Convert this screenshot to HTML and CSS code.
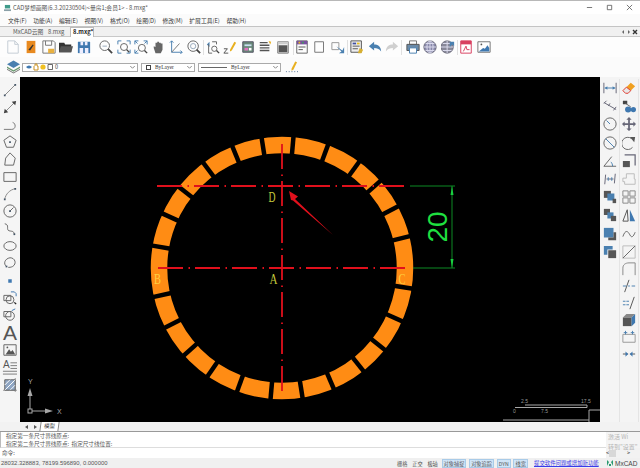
FILE: index.html
```html
<!DOCTYPE html>
<html lang="zh-CN">
<head>
    <meta charset="UTF-8">
    <title>CAD梦想画图</title>
    <link rel="stylesheet" href="styles.css">
</head>
<body>
    <!-- Barra de título -->
    <div class="titlebar">
        <svg class="app-ico" viewBox="0 0 8 9"><path d="M1 1H7V5H1Z" fill="#3f9a8a"/><path d="M0 6H8V8H0Z" fill="#8aa0a8"/></svg>
        <span class="title-text">CAD梦想画图(6.3.20230504)&lt;量房1;会员1&gt; - 8.mxg*</span>
        <div class="win-btns">
            <svg viewBox="0 0 8 8"><path d="M1 4H7"/></svg>
            <svg viewBox="0 0 8 8"><path d="M1.5 1.5H6.5V6.5H1.5Z"/></svg>
            <svg viewBox="0 0 8 8"><path d="M1 1L7 7M7 1L1 7"/></svg>
        </div>
    </div>

    <!-- Menu -->
    <div class="menubar">
        <span>文件(F)</span><span>功能(A)</span><span>编辑(E)</span><span>视图(V)</span><span>格式(O)</span><span>绘图(D)</span><span>修改(M)</span><span>扩展工具(E)</span><span>帮助(H)</span>
    </div>

    <!-- Abas -->
    <div class="tabbar">
        <span class="tab">MxCAD云图</span>
        <span class="tab tab-file">8.mxg</span>
        <span class="tab tab-active">8.mxg*</span>
        <div class="tab-ctrl">
            <svg viewBox="0 0 6 6"><path d="M4 1L2 3L4 5Z" fill="#666"/></svg>
            <svg viewBox="0 0 6 6"><path d="M2 1L4 3L2 5Z" fill="#666"/></svg>
            <svg viewBox="0 0 6 6"><path d="M1 1L5 5M5 1L1 5" stroke="#333" stroke-width="1.4"/></svg>
        </div>
    </div>

    <!-- Barra de ferramentas principal -->
    <div class="toolbar">
        <div class="group g1">
            <span class="slot"><svg class="ico" viewBox="0 0 16 16"><path d="M2 1H10L14 5V15H2Z" stroke="#c4ccd4"/><path d="M10 1V5H14" stroke="#c4ccd4"/></svg></span>
            <span class="slot"><svg class="ico" viewBox="0 0 16 16"><path d="M3 1H13V15H3Z" fill="#e88a20" stroke="none"/><path d="M5 11L10 5L11 6L7 12Z" fill="#333" stroke="none"/></svg></span>
            <span class="slot"><svg class="ico" viewBox="0 0 16 16"><path d="M1 1H13L15 3V15H1Z" stroke="#777"/><path d="M4 1V6H11V1" stroke="#777"/><path d="M7 10H14V15H7Z" fill="#e8b040" stroke="none"/></svg></span>
            <span class="slot"><svg class="ico" viewBox="0 0 16 16"><path d="M0 3H6L7 5H14V14H0Z" fill="#333" stroke="none"/><path d="M2 7H16L14 14H0Z" fill="#555" stroke="none"/></svg></span>
            <span class="slot"><svg class="ico" viewBox="0 0 16 16"><path d="M1 2H15V15H1Z" fill="#3f78b0" stroke="none"/><path d="M4 2H7V6H4ZM9 2H12V6H9ZM3 9H7V15H3ZM9 9H13V15H9Z" fill="#eef" stroke="none"/></svg></span>
        </div>
        <div class="group g2">
            <span class="slot"><svg class="ico" viewBox="0 0 16 16"><circle cx="6.5" cy="6.5" r="5.5"/><path d="M10.5 10.5L15 15" stroke="#444" stroke-width="2"/><path d="M4 7H9" stroke="#9ab"/></svg></span>
            <span class="slot"><svg class="ico" viewBox="0 0 16 16"><path d="M1 5V1H5M11 1H15V5M15 11V15H11M5 15H1V11" stroke="#4a80b0"/><circle cx="8" cy="8" r="4"/><path d="M11 11L14 14" stroke="#444" stroke-width="1.6"/></svg></span>
            <span class="slot"><svg class="ico" viewBox="0 0 16 16"><path d="M1 5V1H5M11 1H15V5M1 1L4 4M15 1L12 4M1 15V11M1 15H5M1 15L4 12" stroke="#4a80b0"/><circle cx="9" cy="9" r="4"/><path d="M12 12L15 15" stroke="#444" stroke-width="1.6"/></svg></span>
            <span class="slot"><svg class="ico" viewBox="0 0 16 16"><path d="M4 15L2 9V7L4 8V3H6V2H8V3H10V4H12V11L10 15Z" fill="#666" stroke="none"/></svg></span>
            <span class="slot"><svg class="ico" viewBox="0 0 16 16"><path d="M3 1V14H15" stroke="#4a80b0"/><path d="M3 14L12 4" stroke="#777"/><path d="M1 3L3 1L5 3M13 12L15 14L13 16" stroke="#4a80b0"/></svg></span>
            <span class="slot"><svg class="ico" viewBox="0 0 16 16"><circle cx="7" cy="7" r="6"/><circle cx="7" cy="7" r="3" stroke="#9ab"/><path d="M11 11L15 15" stroke="#444" stroke-width="2"/></svg></span>
        </div>
        <span class="sep"></span>
        <div class="group">
            <span class="slot"><svg class="ico" viewBox="0 0 16 16"><path d="M1 5L4 2L4 8Z" fill="#4a80b0" stroke="none"/><path d="M3 5V15H7M7 2H12V5"/><circle cx="9.5" cy="10" r="3"/><path d="M12 12L15 15" stroke="#444" stroke-width="1.6"/></svg></span>
            <span class="slot"><svg class="ico" viewBox="0 0 16 16"><path d="M8 11L13 2L15 3L10 12L8 13Z" fill="#e8b020" stroke="none"/><path d="M1 10H5L1 15H6" stroke="#555"/></svg></span>
            <span class="slot"><svg class="ico" viewBox="0 0 16 16"><path d="M2 2H14V14H2Z" fill="#6a8a7a" stroke="#556"/><path d="M4 5H12V7H4Z" fill="#c8e0f0" stroke="none"/><path d="M4 9H8V12H4Z" fill="#e070c0" stroke="none"/><path d="M9 9H12V12H9Z" fill="#fff" stroke="none"/></svg></span>
            <span class="slot"><svg class="ico" viewBox="0 0 16 16"><path d="M2 3H11M2 6H13M2 9H13M2 12H13" stroke="#555" stroke-width="1.6"/><path d="M12 1L15 2L14 5Z" fill="#e8b020" stroke="none"/></svg></span>
            <span class="slot"><svg class="ico" viewBox="0 0 16 16"><path d="M2 2H14V15H2Z" stroke="#777"/><path d="M2 2H14V5H2Z" fill="#ccc" stroke="none"/><path d="M3 6H13V14H3Z" fill="#555" stroke="none"/></svg></span>
        </div>
        <span class="sep s1"></span>
        <div class="group">
            <span class="slot"><svg class="ico" viewBox="0 0 16 16"><path d="M2 1H14V15H2Z" stroke="#666"/><path d="M2 1H14V5H2Z" fill="#7a50a0" stroke="none"/><path d="M4 2H6V4H4Z" fill="#e8c020" stroke="none"/><path d="M8 2H10V4H8Z" fill="#40a060" stroke="none"/><path d="M4 8H12M4 11H9" stroke="#555"/></svg></span>
            <span class="slot"><svg class="ico" viewBox="0 0 16 16"><path d="M2 2H12V14H2Z" stroke="#777"/></svg></span>
            <span class="slot"><svg class="ico" viewBox="0 0 16 16"><path d="M1 3H9V11H1Z" stroke="#999"/><path d="M6 7L13 12L15 8L15 15L9 15L12 13Z" fill="#4a80b0" stroke="none"/></svg></span>
        </div>
        <span class="sep s1"></span>
        <div class="group">
            <span class="slot"><svg class="ico" viewBox="0 0 16 16"><path d="M1 1H13V14H1Z" fill="#eee" stroke="#555"/><path d="M3 3H7V5H3Z" fill="#4050a0" stroke="none"/><path d="M8 3H11V5H8Z" fill="#e8c020" stroke="none"/><path d="M3 7H11M3 10H9" stroke="#555"/><path d="M9 15L11 9L15 11L13 15Z" fill="#d8b030" stroke="none"/></svg></span>
            <span class="slot"><svg class="ico" viewBox="0 0 16 16"><path d="M1 7L7 2V5C11 5 15 7 15 13C13 10 10 9 7 9V12Z" fill="#4a80b0" stroke="none"/></svg></span>
        </div>
        <div class="group g-redo">
            <span class="slot"><svg class="ico" viewBox="0 0 16 16"><path d="M15 7L9 2V5C5 5 1 7 1 13C3 10 6 9 9 9V12Z" fill="#d0d0d0" stroke="none"/></svg></span>
        </div>
        <span class="sep"></span>
        <div class="group g-print">
            <span class="slot"><svg class="ico" viewBox="0 0 16 16"><path d="M4 1H12V5H4Z" stroke="#777"/><path d="M1 5H15V12H1Z" fill="#6a8aa8" stroke="#555"/><path d="M4 9H12V15H4Z" fill="#fff" stroke="#4a80b0"/></svg></span>
            <span class="slot"><svg class="ico" viewBox="0 0 16 16"><circle cx="8" cy="8" r="7" fill="#88a" stroke="#667"/><path d="M1 8H15M8 1V15M3 4H13M3 12H13" stroke="#dde"/><ellipse cx="8" cy="8" rx="3.5" ry="7" stroke="#dde"/></svg></span>
            <span class="slot"><svg class="ico" viewBox="0 0 16 16"><circle cx="7" cy="8" r="7" fill="#889" stroke="#667"/><path d="M0 8H14M7 1V15M2 4H12M2 12H12" stroke="#dde"/><path d="M10 2H15V7L13 5L10 8Z" fill="#4a80b0" stroke="none"/></svg></span>
        </div>
        <span class="sep"></span>
        <div class="group">
            <span class="slot"><svg class="ico" viewBox="0 0 16 16"><path d="M2 1H14V15H2Z" fill="#fff" stroke="#d84060"/><path d="M2 1H14V5H2Z" fill="#d84060" stroke="none"/><path d="M5 13L8 7L9 11H12" stroke="#d84060"/></svg></span>
            <span class="slot"><svg class="ico" viewBox="0 0 16 16"><path d="M1 2H15V14H1Z" fill="#fff" stroke="#777"/><path d="M2 13L7 9L9 10L12 6L14 9V13Z" fill="#3f78b0" stroke="none"/><circle cx="5" cy="5" r="1" fill="#555" stroke="none"/></svg></span>
        </div>
    </div>

    <!-- Barra de camadas -->
    <div class="layerbar">
        <svg class="layers-ico" viewBox="0 0 14 14"><path d="M7 0L14 4L7 8L0 4Z" fill="#4a80b0"/><path d="M0 6.5L7 10.5L14 6.5V8L7 12L0 8Z" fill="#6a9a70"/><path d="M0 9L7 13L14 9V10L7 14L0 10Z" fill="#777"/></svg>
        <div class="combo combo-layer">
            <svg class="state" viewBox="0 0 28 8"><path d="M1 4Q4 1 7 4Q4 7 1 4Z" fill="#3f78b0"/><path d="M9 3V7H13V3H12V1H10V3" fill="none" stroke="#c89020"/><circle cx="18" cy="4" r="2.6" fill="#f0c020"/><path d="M23 1.5H27.500V6.500H23Z" fill="#fff" stroke="#444" stroke-width=".8"/></svg>
            <span class="combo-label">0</span>
            <svg class="chev" viewBox="0 0 6 4"><path d="M0 0L3 3L6 0"/></svg>
        </div>
        <div class="combo combo-color">
            <span class="swatch"></span>
            <span class="combo-label serif">ByLayer</span>
            <svg class="chev" viewBox="0 0 6 4"><path d="M0 0L3 3L6 0"/></svg>
        </div>
        <div class="combo combo-line">
            <span class="line-sample"></span>
            <span class="combo-label serif">ByLayer</span>
            <svg class="chev" viewBox="0 0 6 4"><path d="M0 0L3 3L6 0"/></svg>
        </div>
        <svg class="match-ico" viewBox="0 0 14 14"><path d="M7 9L11 1L13 2L9 10L7 11Z" fill="#e8b020"/><path d="M1 12H2M4 12H5M7 12H8M10 12H11M13 12H14" stroke="#4a6a90"/></svg>
    </div>

    <!-- Área central -->
    <div class="workspace">
        <div class="side-left">
            <span class="vslot"><svg class="ico" viewBox="0 0 16 16"><path d="M2 14L14 2" stroke="#888"/><path d="M1 13H3V15H1ZM13 1H15V3H13Z" fill="#456" stroke="none"/></svg></span>
            <span class="vslot"><svg class="ico" viewBox="0 0 16 16"><path d="M2 14L14 2" stroke="#888"/><path d="M1 15L2 10L6 14ZM15 1L14 6L10 2Z" fill="#444" stroke="none"/></svg></span>
            <span class="vslot"><svg class="ico" viewBox="0 0 16 16"><path d="M1 13H10C15 13 15 6 11 5" stroke="#777"/></svg></span>
            <span class="vslot"><svg class="ico" viewBox="0 0 16 16"><path d="M8 1L15 6L12 14H4L1 6Z"/><path d="M7 7H9V9H7Z" fill="#456" stroke="none"/></svg></span>
            <span class="vslot"><svg class="ico" viewBox="0 0 16 16"><path d="M2 15L3 7L8 1L14 7L12 15Z"/></svg></span>
            <span class="vslot"><svg class="ico" viewBox="0 0 16 16"><path d="M1 3H15V13H1Z"/></svg></span>
            <span class="vslot"><svg class="ico" viewBox="0 0 16 16"><path d="M2 14C3 8 8 3 14 2" stroke="#888"/><path d="M1 13H3V15H1ZM13 1H15V3H13Z" fill="#456" stroke="none"/></svg></span>
            <span class="vslot"><svg class="ico" viewBox="0 0 16 16"><circle cx="8" cy="8" r="7"/><path d="M8 8L12 4"/><path d="M7 7H9V9H7Z" fill="#456" stroke="none"/></svg></span>
            <span class="vslot"><svg class="ico" viewBox="0 0 16 16"><path d="M2 2C8 3 3 9 7 10S12 10 13 14"/><path d="M12 13H14V15H12Z" fill="#456" stroke="none"/></svg></span>
            <span class="vslot"><svg class="ico" viewBox="0 0 16 16"><ellipse cx="8" cy="8" rx="7" ry="5"/></svg></span>
            <span class="vslot"><svg class="ico" viewBox="0 0 16 16"><path d="M4 12C0 9 2 3 8 2C14 2 16 9 11 12C9 13 7 13 6 13"/><path d="M3 11H5V13H3Z" fill="#456" stroke="none"/></svg></span>
            <span class="vslot"><svg class="ico" viewBox="0 0 16 16"><path d="M6 6H10V10H6Z" fill="#3f78b0" stroke="none"/></svg></span>
            <span class="vslot"><svg class="ico" viewBox="0 0 16 16"><path d="M1 5H9V11H1Z"/><circle cx="8" cy="10" r="4.500"/><path d="M9 1H13L15 3V6" stroke="#3f78b0"/><path d="M13 13L15 15" stroke="#222" stroke-width="1.6"/></svg></span>
            <span class="vslot"><svg class="ico" viewBox="0 0 16 16"><path d="M1 4H9V10H1Z"/><circle cx="8" cy="9" r="5"/><path d="M10 3L14 1" stroke="#3f78b0"/></svg></span>
            <span class="vslot big-a">A</span>
            <span class="vslot"><svg class="ico" viewBox="0 0 16 16"><path d="M1 2H15V14H1Z"/><path d="M3 13L7 7L9 10L11 8L14 13Z" fill="#555" stroke="none"/><circle cx="5" cy="5" r="1" fill="#555" stroke="none"/></svg></span>
            <span class="vslot mtext">A<svg class="ico-lines" viewBox="0 0 16 16"><path d="M9 3H16M9 6H16M9 9H16M1 12H16M1 15H16"/></svg></span>
            <span class="vslot"><svg class="ico" viewBox="0 0 16 16"><path d="M2 2H14V14H2Z" fill="#8fa6c4"/><path d="M2 8L8 2M2 14L14 2M8 14L14 8" stroke="#fff"/><path d="M0 14H16M14 0V16" stroke="#777" stroke-width=".8"/></svg></span>
        </div>

        <!-- Desenho: coordenadas do viewBox = coordenadas da página -->
        <svg class="canvas" viewBox="20 77 580 345">
            <circle class="ring" cx="282" cy="268" r="123"/>
            <g class="gaps">
                <line x1="282" y1="132" x2="282" y2="158" transform="rotate(5 282 268)"/>
                <line x1="282" y1="132" x2="282" y2="158" transform="rotate(20.5 282 268)"/>
                <line x1="282" y1="132" x2="282" y2="158" transform="rotate(36 282 268)"/>
                <line x1="282" y1="132" x2="282" y2="158" transform="rotate(48.5 282 268)"/>
                <line x1="282" y1="132" x2="282" y2="158" transform="rotate(62 282 268)"/>
                <line x1="282" y1="132" x2="282" y2="158" transform="rotate(76 282 268)"/>
                <line x1="282" y1="132" x2="282" y2="158" transform="rotate(99 282 268)"/>
                <line x1="282" y1="132" x2="282" y2="158" transform="rotate(113.9 282 268)"/>
                <line x1="282" y1="132" x2="282" y2="158" transform="rotate(128.5 282 268)"/>
                <line x1="282" y1="132" x2="282" y2="158" transform="rotate(141.7 282 268)"/>
                <line x1="282" y1="132" x2="282" y2="158" transform="rotate(156.8 282 268)"/>
                <line x1="282" y1="132" x2="282" y2="158" transform="rotate(171 282 268)"/>
                <line x1="282" y1="132" x2="282" y2="158" transform="rotate(185 282 268)"/>
                <line x1="282" y1="132" x2="282" y2="158" transform="rotate(200 282 268)"/>
                <line x1="282" y1="132" x2="282" y2="158" transform="rotate(214.5 282 268)"/>
                <line x1="282" y1="132" x2="282" y2="158" transform="rotate(228.3 282 268)"/>
                <line x1="282" y1="132" x2="282" y2="158" transform="rotate(243 282 268)"/>
                <line x1="282" y1="132" x2="282" y2="158" transform="rotate(257.3 282 268)"/>
                <line x1="282" y1="132" x2="282" y2="158" transform="rotate(279.8 282 268)"/>
                <line x1="282" y1="132" x2="282" y2="158" transform="rotate(294.5 282 268)"/>
                <line x1="282" y1="132" x2="282" y2="158" transform="rotate(308.2 282 268)"/>
                <line x1="282" y1="132" x2="282" y2="158" transform="rotate(323.2 282 268)"/>
                <line x1="282" y1="132" x2="282" y2="158" transform="rotate(337.8 282 268)"/>
                <line x1="282" y1="132" x2="282" y2="158" transform="rotate(351.1 282 268)"/>
            </g>
            <g class="center-lines">
                <line x1="157" y1="186" x2="406" y2="186"/>
                <line x1="158" y1="268" x2="406" y2="268"/>
                <line x1="282" y1="144" x2="282" y2="392"/>
            </g>
            <path class="arrow" d="M289 191L298 196.500L295 199L333 235L293 200.500L291 200Z"/>
            <text class="lbl lbl-olive" x="268.500" y="202" textLength="7" lengthAdjust="spacingAndGlyphs">D</text>
            <text class="lbl lbl-olive" x="269.500" y="284" textLength="8" lengthAdjust="spacingAndGlyphs">A</text>
            <text class="lbl lbl-amber" x="154" y="284" textLength="7" lengthAdjust="spacingAndGlyphs">B</text>
            <text class="lbl lbl-amber" x="398.500" y="284" textLength="7" lengthAdjust="spacingAndGlyphs">C</text>
            <g class="dim">
                <line x1="410" y1="186" x2="455" y2="186"/>
                <line x1="413" y1="268" x2="455" y2="268"/>
                <line x1="452" y1="186" x2="452" y2="268"/>
            </g>
            <path class="dim-head" d="M452 186L453.500 195H450.500ZM452 268L453.500 259H450.500Z"/>
            <text class="dim-text" transform="translate(447 227) rotate(-90)">20</text>
            <g class="ucs">
                <path d="M30 409V393M32 411H48"/>
                <path class="ucs-head" d="M30 388L32.500 396H27.500ZM53 411L45 413.500V408.500Z"/>
                <rect x="28" y="409" width="4" height="4"/>
            </g>
            <text class="ucs-text" x="28" y="384">Y</text>
            <text class="ucs-text" x="57" y="414">X</text>
            <g class="ucs">
                <path d="M515 407.500H525M525 405H587V407.500H525M503 420H589M589 422V410H600"/>
            </g>
            <text class="scale-text" x="521" y="403">2.5</text>
            <text class="scale-text" x="581" y="403">17.5</text>
            <text class="scale-text" x="513" y="413">0</text>
            <text class="scale-text" x="541" y="413">7.5</text>
        </svg>

        <div class="side-right">
            <div class="col">
                <span class="rslot"><svg class="ico" viewBox="0 0 16 16"><path d="M1 2V14M15 2V14" stroke="#667"/><path d="M2 8H14" stroke="#4a80b0"/><path d="M2 8L5 6V10ZM14 8L11 6V10Z" fill="#4a80b0" stroke="none"/></svg></span>
                <span class="rslot"><svg class="ico" viewBox="0 0 16 16"><path d="M1 4L15 12M4 2L1 5M15 9L12 13M6 8L8 5" stroke="#667"/></svg></span>
                <span class="rslot"><svg class="ico" viewBox="0 0 16 16"><circle cx="8" cy="8" r="7"/><path d="M8 8L4 4" stroke="#4a80b0"/></svg></span>
                <span class="rslot"><svg class="ico" viewBox="0 0 16 16"><circle cx="8" cy="8" r="7"/><path d="M3 3L13 13" stroke="#4a80b0"/></svg></span>
                <span class="rslot"><svg class="ico" viewBox="0 0 16 16"><path d="M1 14H15M1 14L10 3"/><path d="M9 9C10 10 11 12 11 14" stroke="#4a80b0"/></svg></span>
                <span class="rslot"><svg class="ico" viewBox="0 0 16 16"><path d="M3 3L2 14M14 2L13 13M4 8H12" stroke="#667"/><path d="M6 6V10M10 6V10" stroke="#4a80b0"/></svg></span>
                <span class="rslot"><svg class="ico" viewBox="0 0 16 16"><path d="M1 1H9V9H1Z" fill="#555" stroke="none"/><path d="M5 4H13V12H5Z" fill="#4a80b0" stroke="none"/><path d="M11 10H15V15H11Z" fill="#555" stroke="none"/></svg></span>
                <span class="rslot"><svg class="ico" viewBox="0 0 16 16"><path d="M1 1H8V8H1Z" fill="#555" stroke="none"/><path d="M5 5H12V12H5Z" fill="#4a80b0" stroke="none"/><path d="M9 9H15V15H9Z" fill="#555" stroke="none"/></svg></span>
                <span class="rslot"><svg class="ico" viewBox="0 0 16 16"><path d="M1 1H12V12H1Z" fill="#4a80b0" stroke="none"/><path d="M12 6H15V15H6V12H12Z" fill="#555" stroke="none"/></svg></span>
                <span class="rslot"><svg class="ico" viewBox="0 0 16 16"><path d="M1 1H11V5H5V11H1Z" fill="#4a80b0" stroke="none"/><path d="M6 6H15V15H6Z" fill="#555" stroke="none"/></svg></span>
            </div>
            <div class="col col-2">
                <span class="rslot"><svg class="ico" viewBox="0 0 16 16"><path d="M1 11L10 2L15 6L7 14H4Z" fill="#f0a020" stroke="none"/><path d="M1 11L5 7L10 11L7 14H4Z" fill="#e8e8e8" stroke="#e04040"/></svg></span>
                <span class="rslot"><svg class="ico" viewBox="0 0 16 16"><path d="M1 2H6V6H1Z" fill="#444" stroke="none"/><path d="M4 5L10 9" stroke="#666"/><circle cx="7" cy="12" r="3.500" fill="#3f78b0" stroke="none"/><circle cx="13" cy="12" r="3" fill="#3f78b0" stroke="none"/></svg></span>
                <span class="rslot"><svg class="ico" viewBox="0 0 16 16"><path d="M8 0L11 3H9V7H13V5L16 8L13 11V9H9V13H11L8 16L5 13H7V9H3V11L0 8L3 5V7H7V3H5Z" fill="#667" stroke="none"/></svg></span>
                <span class="rslot"><svg class="ico" viewBox="0 0 16 16"><path d="M12 13A7 7 0 1 1 11 3"/><path d="M9 1L15 1L14 7Z" fill="#555" stroke="none"/></svg></span>
                <span class="rslot"><svg class="ico" viewBox="0 0 16 16"><path d="M3 1H15V13" stroke="#667" stroke-width="1.4"/><path d="M1 8H9V15H1Z" fill="#555" stroke="none"/></svg></span>
                <span class="rslot"><svg class="ico" viewBox="0 0 16 16"><path d="M5 2H14V8H15V14H3V11H1V7H5Z" stroke="#bbb"/></svg></span>
                <span class="rslot"><svg class="ico" viewBox="0 0 16 16"><path d="M1 1H7V7H1ZM9 1H15V7H9ZM1 9H7V15H1ZM9 9H15V15H9Z" stroke="#888"/></svg></span>
                <span class="rslot"><svg class="ico" viewBox="0 0 16 16"><path d="M6 2L1 15H7Z" stroke="#555"/><path d="M9 2L15 15H9Z" fill="#3f78b0" stroke="none"/></svg></span>
                <span class="rslot"><svg class="ico" viewBox="0 0 16 16"><path d="M1 11C4 2 7 5 9 9S13 11 15 6"/></svg></span>
                <span class="rslot"><svg class="ico" viewBox="0 0 16 16"><path d="M1 1H15V15H1Z" stroke="#bbb"/><path d="M1 15L15 1"/></svg></span>
                <div class="col-lower">
                    <span class="lslot"><svg class="ico" viewBox="0 0 16 16"><path d="M1 15V7C1 3 4 1 8 1H15V15" stroke="#888"/></svg></span>
                    <span class="lslot"><svg class="ico" viewBox="0 0 16 16"><path d="M3 15L8 1" stroke="#555"/><path d="M1 8H5M7 8H9M11 8H15" stroke="#4a80b0"/></svg></span>
                    <span class="lslot"><svg class="ico" viewBox="0 0 16 16"><path d="M9 15L14 1" stroke="#555"/><path d="M1 6H9M1 10H9" stroke="#4a80b0" stroke-dasharray="3 1"/></svg></span>
                    <span class="lslot"><svg class="ico" viewBox="0 0 16 16"><path d="M1 5H11V15H1Z" fill="#555" stroke="none"/><path d="M1 5L5 1H15L11 5Z" fill="#888" stroke="none"/><path d="M11 5L15 1V11L11 15Z" fill="#3f78b0" stroke="none"/></svg></span>
                    <span class="lslot"><svg class="ico" viewBox="0 0 16 16"><path d="M1 5H15V14H1Z" stroke="#999"/><path d="M4 1V5M2 3H6M12 1V5M10 3H14" stroke="#4a80b0"/></svg></span>
                    <span class="lslot"><svg class="ico" viewBox="0 0 16 16"><path d="M1 8H7M9 8H15" stroke="#555"/><path d="M7 8L4 5V11ZM9 8L12 5V11Z" fill="#3f78b0" stroke="none"/></svg></span>
                </div>
            </div>
        </div>
    </div>

    <!-- Abas de modelo e linha de comando -->
    <div class="sheetbar">
        <svg class="sheet-nav" viewBox="0 0 14 6"><path d="M4 1L1 3L4 5ZM10 1L13 3L10 5Z" fill="#555"/></svg>
        <span class="sheet-tab">模型</span>
    </div>
    <div class="cmd-history">
        <p>指定第一条尺寸界线原点:</p>
        <p>指定第二条尺寸界线原点:&nbsp;&nbsp;指定尺寸线位置:</p>
    </div>
    <div class="cmd-input">
        <span>命令:</span>
        <div class="cmd-scroll"><span>&lt;</span><i></i><span>&gt;</span></div>
    </div>
    <div class="activate">
        <span>激活 Wi</span>
        <span>转到"设置"</span>
    </div>

    <!-- Barra de status -->
    <div class="statusbar">
        <span class="coords">28032.328883, 78199.596890, 0.000000</span>
        <div class="toggles">
            <span>栅格</span><span>正交</span><span>极轴</span>
            <span class="on">对象捕捉</span><span class="on">对象追踪</span><span class="on">DYN</span><span class="on">线宽</span>
        </div>
        <span class="feedback">提交软件问题或增加新功能</span>
        <span class="brand"><svg viewBox="0 0 8 8"><path d="M1 1L3 3L1 7ZM7 1L5 3L7 7ZM3 5H5V7H3Z" fill="#2a9a70"/></svg>MxCAD</span>
    </div>
</body>
</html>
```

FILE: styles.css
```css
/* Reset */
* {
    margin: 0;
    padding: 0;
    box-sizing: border-box;
}

body {
    width: 640px;
    height: 468px;
    overflow: hidden;
    position: relative;
    background-color: #f4f4f4;
    font-family: "Noto Sans CJK SC", "Liberation Sans", sans-serif;
    font-size: 5.600px;
    color: #444;
    display: flex;
    flex-direction: column;
}

/* Barra de título */
.titlebar {
    height: 14px;
    flex: none;
    display: flex;
    align-items: center;
    background-color: #fff;
    border-top: 1px solid #b8b8b8;
    padding-left: 4px;
}

.app-ico {
    width: 7px;
    height: 8px;
    margin-right: 2px;
}

.title-text {
    font-size: 5.800px;
    color: #555;
}

.win-btns {
    margin-left: auto;
    display: flex;
    gap: 13px;
    padding-right: 7px;
}

.win-btns svg {
    width: 7px;
    height: 7px;
    fill: none;
    stroke: #555;
    stroke-width: 0.9;
}

/* Menu */
.menubar {
    height: 12px;
    flex: none;
    display: flex;
    align-items: center;
    gap: 6.600px;
    padding-left: 8px;
    background-color: #fbfbfb;
    font-size: 5.800px;
    color: #333;
}

/* Abas */
.tabbar {
    height: 11px;
    flex: none;
    display: flex;
    align-items: flex-end;
    background-color: #f0f0f0;
    border-top: 1px solid #c4c4c4;
    border-bottom: 1px solid #c8c8c8;
    padding-left: 13px;
    font-size: 5.800px;
}

.tab {
    height: 9px;
    line-height: 9px;
    padding-right: 4px;
    width: 35px;
    color: #555;
}

.tab-file {
    width: 22px;
}

.tab-active {
    width: 24px;
    background-color: #fff;
    border: 1px solid #bbb;
    border-bottom: none;
    color: #222;
    padding-left: 2px;
    line-height: 8px;
    font-weight: 700;
    margin-bottom: -1px;
    height: 10px;
}

.tab-ctrl {
    margin-left: auto;
    display: flex;
    gap: 0;
    padding-right: 2px;
    align-self: center;
}

.tab-ctrl svg {
    width: 6px;
    height: 6px;
    fill: none;
}

/* Barra de ferramentas */
.toolbar {
    height: 20px;
    flex: none;
    display: flex;
    align-items: center;
    padding-left: 4.700px;
    background-color: #fdfdfd;
}

.group {
    display: flex;
}

.g2 {
    margin-left: 4.500px;
}

.g-print {
    margin-left: 1.500px;
}

.slot {
    width: 17.600px;
    height: 16px;
    display: flex;
    align-items: center;
    justify-content: center;
}

.sep {
    width: 1px;
    height: 15px;
    background-color: #e0e0e0;
}

.s1 {
    margin-left: 1px;
}

.ico {
    width: 14px;
    height: 14px;
    fill: none;
    stroke: #666;
    stroke-width: 1.1;
}

/* Barra de camadas */
.layerbar {
    height: 20px;
    flex: none;
    display: flex;
    align-items: center;
    padding-left: 7px;
    background-color: #fbfbfb;
}

.layers-ico {
    width: 13px;
    height: 14px;
    margin-right: 2px;
}

.combo {
    height: 9px;
    display: flex;
    align-items: center;
    background-color: #fff;
    border: 1px solid #aaa;
    margin-right: 3px;
    padding-left: 2px;
    font-size: 5.500px;
}

.combo-layer {
    width: 116px;
}

.combo-color {
    width: 54px;
}

.combo-line {
    width: 83px;
    margin-right: 4px;
}

.state {
    width: 28px;
    height: 8px;
    margin-right: 2px;
}

.swatch {
    width: 5px;
    height: 5px;
    border: 1px solid #444;
    margin: 0 4px 0 2px;
}

.line-sample {
    width: 26px;
    height: 1px;
    background-color: #666;
    margin-right: 4px;
}

.serif {
    font-family: "Liberation Serif", serif;
    font-size: 5.400px;
    color: #333;
}

.chev {
    width: 5px;
    height: 3px;
    margin-left: auto;
    margin-right: 2px;
    fill: none;
    stroke: #666;
}

.match-ico {
    width: 13px;
    height: 14px;
}

/* Área central */
.workspace {
    height: 345px;
    flex: none;
    display: flex;
}

.side-left {
    width: 20px;
    flex: none;
    display: flex;
    flex-direction: column;
    align-items: center;
    padding-top: 4.300px;
    background-color: #f5f5f5;
}

.vslot {
    width: 20px;
    height: 17.350px;
    flex: none;
    display: flex;
    align-items: center;
    justify-content: center;
}

.big-a {
    font-family: "Liberation Sans", sans-serif;
    font-size: 21px;
    color: #555;
}

.mtext {
    position: relative;
    font-family: "Liberation Sans", sans-serif;
    font-size: 10px;
    color: #555;
    justify-content: flex-start;
    align-items: flex-start;
    padding-left: 3px;
}

.ico-lines {
    position: absolute;
    left: 2px;
    top: 1px;
    width: 15px;
    height: 15px;
    fill: none;
    stroke: #777;
}

.canvas {
    width: 580px;
    height: 345px;
    flex: none;
    background-color: #000;
}

.ring {
    fill: none;
    stroke: #ff8c14;
    stroke-width: 16.500;
}

.gaps line {
    stroke: #000;
    stroke-width: 4.500;
}

.center-lines line {
    stroke: #e0101c;
    stroke-width: 1.800;
    stroke-dasharray: 25 5.500 1.500 5;
}

.arrow {
    fill: #e0101c;
}

.lbl {
    font-family: "Liberation Serif", serif;
    font-size: 15px;
}

.lbl-olive {
    fill: #c4c83c;
}

.lbl-amber {
    fill: #ffd040;
}

.dim line {
    stroke: #0c8a24;
    stroke-width: 1;
}

.dim-head {
    fill: #18d040;
}

.dim-text {
    font-family: "Liberation Sans", sans-serif;
    font-size: 28px;
    fill: #1fe040;
    text-anchor: middle;
}

.ucs {
    fill: none;
    stroke: #a8a8a8;
    stroke-width: 1;
}

.ucs-head {
    fill: #a8a8a8;
    stroke: none;
}

.ucs-text {
    font-family: "Liberation Sans", sans-serif;
    font-size: 7px;
    fill: #a8a8a8;
}

.scale-text {
    font-family: "Liberation Sans", sans-serif;
    font-size: 5px;
    fill: #999;
}

/* Ferramentas à direita */
.side-right {
    width: 40px;
    flex: none;
    display: flex;
    padding-top: 2px;
    background-color: #f4f4f4;
}

.col {
    width: 19px;
    display: flex;
    flex-direction: column;
    align-items: center;
}

.col-2 {
    width: 20px;
    border-left: 1px solid #e4e4e4;
    border-right: 1px solid #e4e4e4;
}

.rslot {
    width: 18px;
    height: 18.200px;
    flex: none;
    display: flex;
    align-items: center;
    justify-content: center;
}

.lslot {
    width: 18px;
    height: 17px;
    flex: none;
    display: flex;
    align-items: center;
    justify-content: center;
}

/* Abas de modelo */
.sheetbar {
    height: 10px;
    flex: none;
    display: flex;
    align-items: center;
    padding-left: 24px;
    background-color: #f2f2f2;
    border-bottom: 1px solid #999;
}

.sheet-nav {
    width: 14px;
    height: 6px;
    margin-right: 2px;
}

.sheet-tab {
    height: 9px;
    line-height: 9px;
    padding: 0 3px;
    font-size: 5.500px;
    background-color: #fff;
    border-left: 1px solid #888;
    border-right: 1px solid #888;
    transform: skewX(-8deg);
}

/* Linha de comando */
.cmd-history {
    height: 16px;
    flex: none;
    width: 606px;
    padding-left: 5px;
    background-color: #fff;
    border-left: 1px solid #bbb;
    border-bottom: 1px solid #ddd;
    color: #555;
    line-height: 8px;
}

.cmd-input {
    height: 10px;
    flex: none;
    display: flex;
    align-items: center;
    padding-left: 2px;
    background-color: #fff;
    color: #444;
}

.cmd-scroll {
    margin-left: auto;
    width: 34px;
    height: 10px;
    display: flex;
    align-items: center;
    justify-content: space-between;
    padding: 0 10px 0 0;
    background-color: #f2f2f2;
}

.cmd-scroll i {
    width: 7px;
    height: 7px;
    margin-left: -12px;
    background-color: #d8d8d8;
}

/* Marca d'água de ativação, sobre o canto */
.activate {
    position: absolute;
    left: 608px;
    top: 432px;
    display: flex;
    flex-direction: column;
    font-size: 6px;
    line-height: 10px;
    color: #b4b4b4;
    white-space: nowrap;
}

/* Barra de status */
.statusbar {
    height: 10px;
    flex: none;
    display: flex;
    align-items: center;
    padding-left: 1px;
    background-color: #f0f0f0;
    font-size: 5.200px;
    white-space: nowrap;
}

.coords {
    font-family: "Liberation Sans", sans-serif;
    font-size: 5.900px;
    color: #555;
    width: 395px;
    flex: none;
}

.toggles {
    display: flex;
    gap: 2.800px;
    width: 138px;
    flex: none;
    color: #555;
}

.toggles span {
    flex: none;
    height: 9px;
    line-height: 9px;
    padding: 0 1px;
}

.toggles .on {
    background-color: #cfe4f7;
    border: 1px solid #a9cbe8;
    line-height: 7px;
}

.feedback {
    width: 72px;
    flex: none;
    font-size: 5.400px;
    color: #3a3ae8;
    text-decoration: underline;
}

.brand {
    display: flex;
    align-items: center;
    gap: 1px;
    font-family: "Liberation Sans", sans-serif;
    font-size: 6.500px;
    color: #444;
}

.brand svg {
    width: 8px;
    height: 8px;
}
```
